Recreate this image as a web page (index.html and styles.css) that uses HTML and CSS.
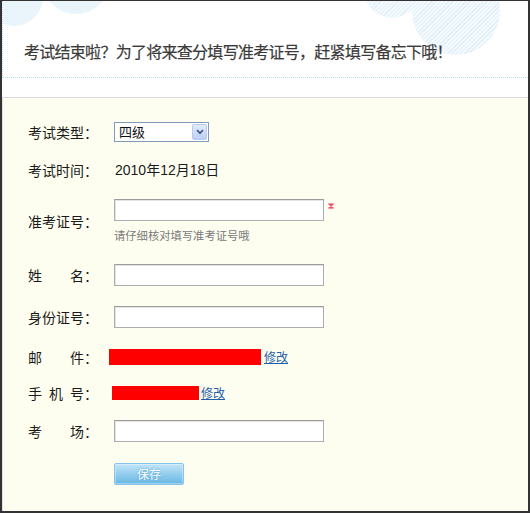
FILE: index.html
```html
<!DOCTYPE html>
<html lang="zh-CN">
<head>
<meta charset="utf-8">
<title>考试备忘</title>
<link rel="stylesheet" href="styles.css">
</head>
<body>
<div class="frame">
  <div class="header">
    <span class="cloud cloud-a"></span>
    <span class="cloud cloud-b"></span>
    <span class="cloud hatch hatch-a"></span>
    <span class="cloud hatch hatch-b"></span>
    <h1 class="title">考试结束啦？为了将来查分填写准考证号，赶紧填写备忘下哦！</h1>
  </div>
  <div class="panel">
    <div class="row">
      <div class="label"><span class="lt">考试类型</span>：</div>
      <div class="select">
        <span>四级</span>
        <span class="arrow"><svg width="8" height="6" viewBox="0 0 8 6"><path d="M1 1.2 L4 4.2 L7 1.2" fill="none" stroke="#4a5f86" stroke-width="1.8"/></svg></span>
      </div>
    </div>
    <div class="row mt-18">
      <div class="label"><span class="lt">考试时间</span>：</div>
      <div class="value">2010年12月18日</div>
    </div>
    <div class="row mt-19">
      <div class="label"><span class="lt">准考证号</span>：</div>
      <div class="field-stack">
        <div class="input-line">
          <input class="text" type="text">
          <svg class="star" width="6" height="6" viewBox="0 0 6 6"><path d="M0.5 0.5 L5.5 5.5 M5.5 0.5 L0.5 5.5 M3 0 V6" stroke="#f0506a" stroke-width="1.4"/></svg>
        </div>
        <div class="hint">请仔细核对填写准考证号哦</div>
      </div>
    </div>
    <div class="row mt-22">
      <div class="label"><span class="lt">姓名</span>：</div>
      <input class="text" type="text">
    </div>
    <div class="row mt-20">
      <div class="label"><span class="lt">身份证号</span>：</div>
      <input class="text" type="text">
    </div>
    <div class="row mt-18 tall">
      <div class="label"><span class="lt">邮件</span>：</div>
      <span class="mask mask-mail"></span><a class="edit" href="#">修改</a>
    </div>
    <div class="row mt-14 tall">
      <div class="label"><span class="lt">手机号</span>：</div>
      <span class="mask mask-phone"></span><a class="edit" href="#">修改</a>
    </div>
    <div class="row mt-16">
      <div class="label"><span class="lt">考场</span>：</div>
      <input class="text" type="text">
    </div>
    <button class="btn" type="button">保存</button>
  </div>
</div>
</body>
</html>
```
FILE: styles.css
```css
html, body {
  margin: 0;
  padding: 0;
  background: #fff;
}

body {
  font-family: "Liberation Sans", "Noto Sans CJK SC", sans-serif;
  color: #222;
}

.frame {
  width: 530px;
  height: 513px;
  box-sizing: border-box;
  border: 2px solid #333;
  border-top-width: 1px;
  display: flex;
  flex-direction: column;
  background: #fff;
  overflow: hidden;
}

.header {
  position: relative;
  height: 77px;
  flex: none;
  box-sizing: border-box;
  border-left: 1px dotted #b8dbee;
  border-bottom: 1px dotted #b8dbee;
  padding: 40px 0 0 21px;
  overflow: hidden;
}

.cloud {
  position: absolute;
  border-radius: 50%;
  background: #eaf4fb;
}

.cloud-a {
  left: -18px;
  top: -33px;
  width: 58px;
  height: 58px;
}

.cloud-b {
  left: 39px;
  top: -55px;
  width: 68px;
  height: 68px;
}

.hatch {
  background: repeating-linear-gradient(135deg, #e1f0f8 0 1px, #f3f9fd 1px 3px);
  background-attachment: fixed;
}

.hatch-a {
  left: 361px;
  top: -39px;
  width: 56px;
  height: 56px;
}

.hatch-b {
  left: 409px;
  top: -34px;
  width: 88px;
  height: 88px;
}

.title {
  position: relative;
  margin: 0;
  font-family: "Noto Sans CJK SC", sans-serif;
  font-size: 16px;
  font-weight: normal;
  line-height: 20px;
  letter-spacing: -0.72px;
  color: #3a3a3a;
  white-space: nowrap;
  -webkit-text-stroke: 0.2px #3a3a3a;
}

.panel {
  flex: 1;
  margin-top: 19px;
  background: #fefef0;
  border-top: 1px solid #dcdcdc;
  border-left: 1px solid #e2e2e2;
  padding: 24px 0 0 25px;
}

.row {
  display: flex;
  align-items: center;
  min-height: 20px;
  line-height: 20px;
}

.row.tall {
  height: 22px;
}

.mt-14 { margin-top: 14px; }
.mt-16 { margin-top: 16px; }
.mt-18 { margin-top: 18px; }
.mt-19 { margin-top: 19px; }
.mt-20 { margin-top: 20px; }
.mt-22 { margin-top: 22px; }

.label {
  width: 86px;
  flex: none;
  font-family: "Noto Sans CJK SC", sans-serif;
  font-size: 14px;
  color: #1a1a1a;
  white-space: nowrap;
}

.lt {
  display: inline-block;
  width: 56px;
  text-align: justify;
  text-align-last: justify;
}

.select {
  width: 95px;
  height: 20px;
  box-sizing: border-box;
  border: 1px solid #7f9db9;
  background: #fff;
  display: flex;
  align-items: center;
  justify-content: space-between;
  padding-left: 4px;
  font-family: "Noto Sans CJK SC", sans-serif;
  font-size: 13px;
  line-height: 18px;
  color: #111;
}

.arrow {
  width: 15px;
  height: 16px;
  margin-right: 1px;
  box-sizing: border-box;
  border: 1px solid #b7cbf0;
  border-radius: 2px;
  background: linear-gradient(#e3ecfd, #bccff6);
  display: flex;
  align-items: center;
  justify-content: center;
}

.arrow svg {
  display: block;
}

.value {
  padding-left: 1px;
  font-size: 14px;
  color: #1a1a1a;
}

.field-stack {
  display: flex;
  flex-direction: column;
}

.input-line {
  display: flex;
  align-items: flex-start;
}

.text {
  display: block;
  width: 210px;
  height: 22px;
  box-sizing: border-box;
  margin: 0;
  padding: 0 3px;
  border: 1px solid #adadad;
  border-top-color: #9c9c9c;
  box-shadow: inset 1px 1px 0 #e4e4e4;
  background: #fff;
  font-size: 13px;
}

.star {
  display: block;
  margin: 4px 0 0 4px;
}

.hint {
  margin-top: 7px;
  font-family: "Noto Sans CJK SC", sans-serif;
  font-size: 11.3px;
  line-height: 14px;
  color: #7a7a7a;
}

.mask {
  display: inline-block;
  background: #ff0000;
}

.mask-mail {
  width: 152px;
  height: 16px;
  margin-left: -5px;
}

.mask-phone {
  width: 87px;
  height: 14px;
  margin-left: -2px;
}

.edit {
  margin-left: 3px;
  font-family: "Noto Sans CJK SC", sans-serif;
  font-size: 12px;
  line-height: 16px;
  color: #1f5ea8;
  text-decoration: underline;
}

.mask-phone + .edit {
  margin-left: 2px;
}

.btn {
  display: block;
  margin: 21px 0 0 86px;
  width: 70px;
  height: 22px;
  box-sizing: border-box;
  padding: 0;
  border: 1px solid #84c4ea;
  border-radius: 2px;
  background: linear-gradient(#c4e5f8, #93cdee 50%, #6ab8e3);
  box-shadow: inset 0 0 0 1px rgba(255, 255, 255, 0.35);
  font-family: "Noto Sans CJK SC", sans-serif;
  font-size: 12px;
  line-height: 20px;
  color: #fff;
  text-shadow: 0 0 2px #3f93c8;
  cursor: pointer;
}
```
